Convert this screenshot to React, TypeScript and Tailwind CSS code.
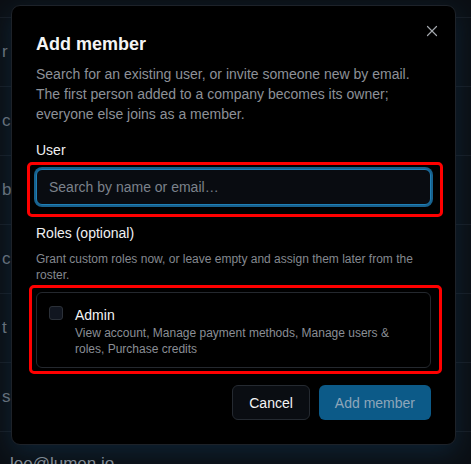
import React from "react";
import { X } from "lucide-react";

const rows = ["r", "c", "b", "c", "t", "s"];

function Backdrop() {
  return (
    <div className="absolute inset-0 bg-[#0b0f14]">
      <div className="h-[18px] border-b border-[#171c23]" />
      {rows.map((ch, i) => (
        <div
          key={i}
          className="h-[69px] flex items-center border-b border-[#171c23] pl-[2px] text-[17px] text-[#6f757d]"
        >
          {ch}
        </div>
      ))}
      <div className="pl-[10px] pt-[22px] text-[17px] leading-5 text-[#8a9098]">lee@lumen.io</div>
    </div>
  );
}

function Highlight({ className }: { className: string }) {
  return (
    <div
      className={`pointer-events-none absolute rounded-[5px] border-[3px] border-[#ff0000] ${className}`}
    />
  );
}

export default function App() {
  return (
    <div
      className="relative h-[464px] w-[471px] overflow-hidden"
      style={{ fontFamily: '"Liberation Sans", Arial, sans-serif' }}
    >
      <Backdrop />

      <div className="absolute left-[11px] top-[5px] w-[445px] rounded-[9px] border border-[#1d2229] bg-black p-6 shadow-[0_8px_24px_rgba(20,70,105,0.35)]">
        <button className="absolute right-[14px] top-4 flex h-[18px] w-[18px] items-center justify-center text-[#a3a7ad]">
          <X size={18} strokeWidth={1.6} />
        </button>

        <h2 className="text-[18px] font-bold leading-7 text-[#f4f4f5]">Add member</h2>
        <p className="mt-1.5 text-sm leading-5 text-[#8d9198]">
          Search for an existing user, or invite someone new by email. The first person added to a
          company becomes its owner; everyone else joins as a member.
        </p>

        <div className="mt-4 text-sm leading-5 text-[#f0f0f2]">User</div>
        <div className="relative mt-[9px]">
          <input
            className="h-9 w-full rounded-md border border-[#1f7fb6] bg-[#090c11] px-3 text-sm text-white outline-none ring-2 ring-[#17618e] placeholder:text-[#7c828b]"
            placeholder="Search by name or email…"
          />
          <Highlight className="-left-[9px] -top-[7px] -right-[12px] -bottom-[12px]" />
        </div>

        <div className="mt-[18px] text-sm leading-5 text-[#f0f0f2]">Roles (optional)</div>
        <p className="mt-2 text-xs leading-4 text-[#84888f]">
          Grant custom roles now, or leave empty and assign them later from the roster.
        </p>

        <div className="relative mt-[9px]">
          <label className="flex gap-3 rounded-md border border-[#24282e] bg-black px-3 pb-[10px] pt-3">
            <span className="mt-[1px] h-[14px] w-[14px] shrink-0 rounded-[3px] border border-[#2b3038] bg-[#111620]" />
            <span className="flex flex-col">
              <span className="text-sm leading-5 text-[#f4f4f5]">Admin</span>
              <span className="text-xs leading-4 text-[#8a8e95]">
                View account, Manage payment methods, Manage users &amp; roles, Purchase credits
              </span>
            </span>
          </label>
          <Highlight className="-left-[7px] -top-[7px] -right-[11px] -bottom-[6px]" />
        </div>

        <div className="mt-[17px] flex justify-end gap-[9px]">
          <button className="h-[35px] rounded-md border border-[#252a31] bg-[#0a0d12] px-4 text-sm text-[#f4f4f5]">
            Cancel
          </button>
          <button className="h-[35px] rounded-md bg-[#0c5a88] px-4 text-sm text-[#8ea6ba]">
            Add member
          </button>
        </div>
      </div>
    </div>
  );
}
